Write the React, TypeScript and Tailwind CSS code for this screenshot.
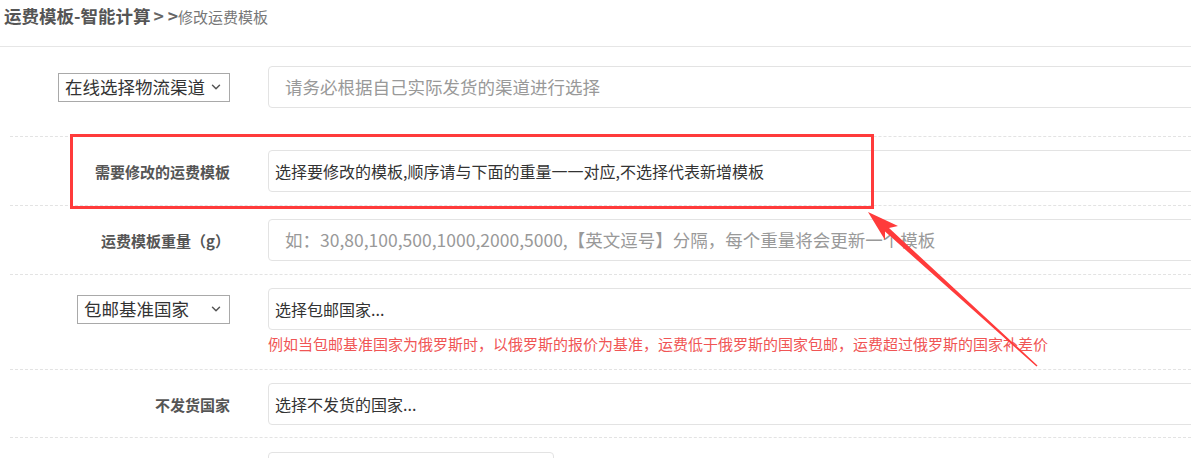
import { ChevronDown } from 'lucide-react';

const cjk = { fontFamily: '"Microsoft YaHei", "Noto Sans CJK SC", "Noto Sans", sans-serif' };

function FakeSelect({ label, width }: { label: string; width: string }) {
  return (
    <div className={`flex h-[29px] items-center justify-between border border-[#a9a9a9] bg-white pl-[6px] pr-[6px] ${width}`}>
      <span className="text-[17.5px] leading-none text-[#333]">{label}</span>
      <ChevronDown className="h-[14px] w-[14px] text-[#555]" strokeWidth={2.5} />
    </div>
  );
}

function Row({ left, children, className = '' }: { left: React.ReactNode; children: React.ReactNode; className?: string }) {
  return (
    <div className={`ml-[10px] flex border-b border-dashed border-[#e3e3e3] ${className}`}>
      <div className="flex h-[42px] w-[220px] shrink-0 items-center justify-end">{left}</div>
      <div className="ml-[38px] flex flex-col">{children}</div>
    </div>
  );
}

function Label({ text }: { text: string }) {
  return <span className="text-[15px] font-bold leading-none text-[#555]">{text}</span>;
}

function TextBox({ text, placeholder }: { text: string; placeholder?: boolean }) {
  return (
    <div className="flex h-[42px] w-[1000px] items-center rounded-[4px] border border-[#e3e3e3] bg-white">
      {placeholder ? (
        <span className="pl-[16px] text-[17.5px] leading-none text-[#999]">{text}</span>
      ) : (
        <span className="pl-[6px] text-[16px] leading-none text-[#333]">{text}</span>
      )}
    </div>
  );
}

export default function App() {
  return (
    <div className="relative h-[458px] w-[1191px] overflow-hidden bg-white" style={cjk}>
      <div className="flex h-[47px] items-start border-b border-[#e6e6e6] pl-[4px] pt-[3px]">
        <span className="text-[17.5px] font-bold text-[#555]">运费模板-智能计算</span>
        <span className="ml-[3px] text-[17.5px] font-bold text-[#666]">&gt; &gt;</span>
        <span className="mt-[3px] text-[15px] text-[#777]">修改运费模板</span>
      </div>

      <Row left={<FakeSelect label="在线选择物流渠道" width="w-[172px]" />} className="h-[90px] pt-[19px]">
        <TextBox text="请务必根据自己实际发货的渠道进行选择" placeholder />
      </Row>

      <Row left={<Label text="需要修改的运费模板" />} className="h-[69px] pt-[13px]">
        <TextBox text="选择要修改的模板,顺序请与下面的重量一一对应,不选择代表新增模板" />
      </Row>

      <Row left={<Label text="运费模板重量（g）" />} className="h-[69px] pt-[13px]">
        <TextBox text="如：30,80,100,500,1000,2000,5000,【英文逗号】分隔，每个重量将会更新一个模板" placeholder />
      </Row>

      <Row left={<FakeSelect label="包邮基准国家" width="w-[153px]" />} className="h-[95px] pt-[13px]">
        <TextBox text="选择包邮国家..." />
        <span className="mt-[4px] text-[15px] leading-[20px] text-[#f05555]">
          例如当包邮基准国家为俄罗斯时，以俄罗斯的报价为基准，运费低于俄罗斯的国家包邮，运费超过俄罗斯的国家补差价
        </span>
      </Row>

      <Row left={<Label text="不发货国家" />} className="h-[68px] pt-[13px]">
        <TextBox text="选择不发货的国家..." />
      </Row>

      <Row left={null} className="border-b-0 pt-[14px]">
        <div className="h-[42px] w-[286px] rounded-[4px] border border-[#e3e3e3] bg-white" />
      </Row>

      {/* annotation: red box + arrow */}
      <div className="pointer-events-none absolute left-[70px] top-[134px] h-[75px] w-[804px] border-[3px] border-[#ff3b3b]" />
      <svg className="pointer-events-none absolute left-0 top-0" width="1191" height="458">
        <polygon
          points="868,212 898,226 889,228 1037.5,365.5 1036.5,366.5 885,231.5 885,240"
          fill="#ff3b3b"
        />
      </svg>
    </div>
  );
}
